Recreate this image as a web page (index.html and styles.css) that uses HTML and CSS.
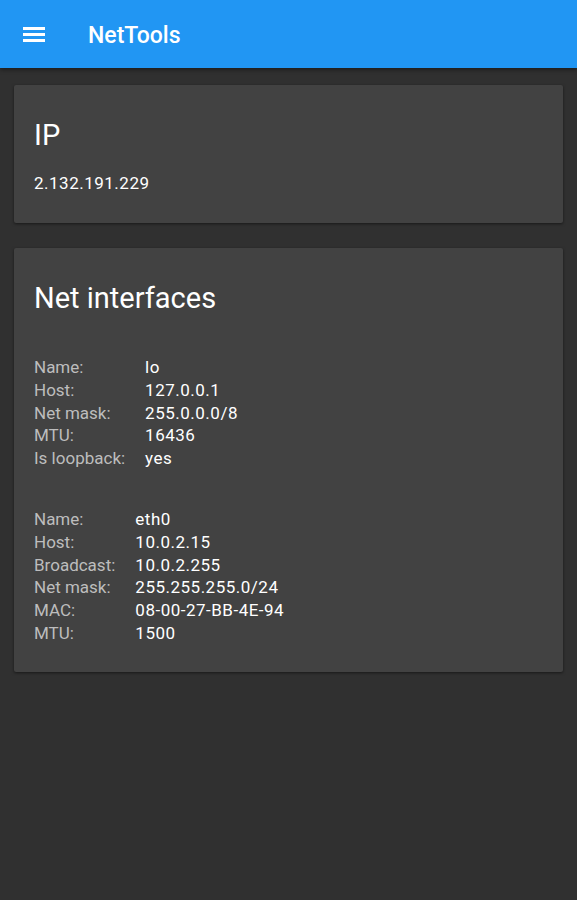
FILE: index.html
```html
<!DOCTYPE html>
<html>
<head>
<meta charset="utf-8">
<link rel="stylesheet" href="styles.css">
</head>
<body>
<header class="appbar">
  <svg class="menu" width="22" height="15" viewBox="0 0 22 15"><rect x="0" y="0" width="22" height="3" fill="#fff"/><rect x="0" y="6" width="22" height="3" fill="#fff"/><rect x="0" y="12" width="22" height="3" fill="#fff"/></svg>
  <div class="title">NetTools</div>
</header>
<main class="content">
  <section class="card ip-card">
    <h2 class="card-title">IP</h2>
    <div class="ip-value">2.132.191.229</div>
  </section>
  <section class="card net-card">
    <h2 class="card-title">Net interfaces</h2>
    <div class="iface first">
      <span class="k">Name:</span><span class="v">lo</span>
      <span class="k">Host:</span><span class="v">127.0.0.1</span>
      <span class="k">Net mask:</span><span class="v">255.0.0.0/8</span>
      <span class="k">MTU:</span><span class="v">16436</span>
      <span class="k">Is loopback:</span><span class="v">yes</span>
    </div>
    <div class="iface second">
      <span class="k">Name:</span><span class="v">eth0</span>
      <span class="k">Host:</span><span class="v">10.0.2.15</span>
      <span class="k">Broadcast:</span><span class="v">10.0.2.255</span>
      <span class="k">Net mask:</span><span class="v">255.255.255.0/24</span>
      <span class="k">MAC:</span><span class="v">08-00-27-BB-4E-94</span>
      <span class="k">MTU:</span><span class="v">1500</span>
    </div>
  </section>
</main>
</body>
</html>
```

FILE: styles.css
```css
html, body {
  margin: 0;
  padding: 0;
  background: #303030;
  font-family: Roboto, "Noto Sans", sans-serif;
  color: #fff;
}
.appbar {
  height: 68px;
  background: #2196f3;
  display: flex;
  align-items: flex-start;
  box-shadow: 0 2px 4px rgba(0,0,0,0.4);
}
.menu {
  display: block;
  margin-left: 23px;
  margin-top: 27px;
}
.title {
  margin-left: 43px;
  margin-top: 2px;
  font-size: 23px;
  font-weight: 500;
  line-height: 68px;
}
.content {
  padding: 17px 14px;
  display: flex;
  flex-direction: column;
  gap: 25px;
}
.card {
  background: #424242;
  border-radius: 2px;
  box-shadow: 0 1px 3px rgba(0,0,0,0.5);
  padding: 34px 20px 27px;
}
.ip-card {
  padding-bottom: 28px;
}
.card-title {
  margin: 0;
  font-size: 29px;
  font-weight: 400;
  line-height: 32px;
}
.ip-value {
  margin-top: 21px;
  font-size: 17px;
  line-height: 23px;
  letter-spacing: 0.5px;
}
.iface {
  display: grid;
  grid-template-columns: auto 1fr;
  column-gap: 20px;
  font-size: 17px;
  line-height: 22.8px;
}
.iface.first { margin-top: 42px; }
.iface.second { margin-top: 38px; }
.k {
  color: #bdbdbd;
}
.v {
  color: #fff;
  letter-spacing: 0.5px;
}
```
